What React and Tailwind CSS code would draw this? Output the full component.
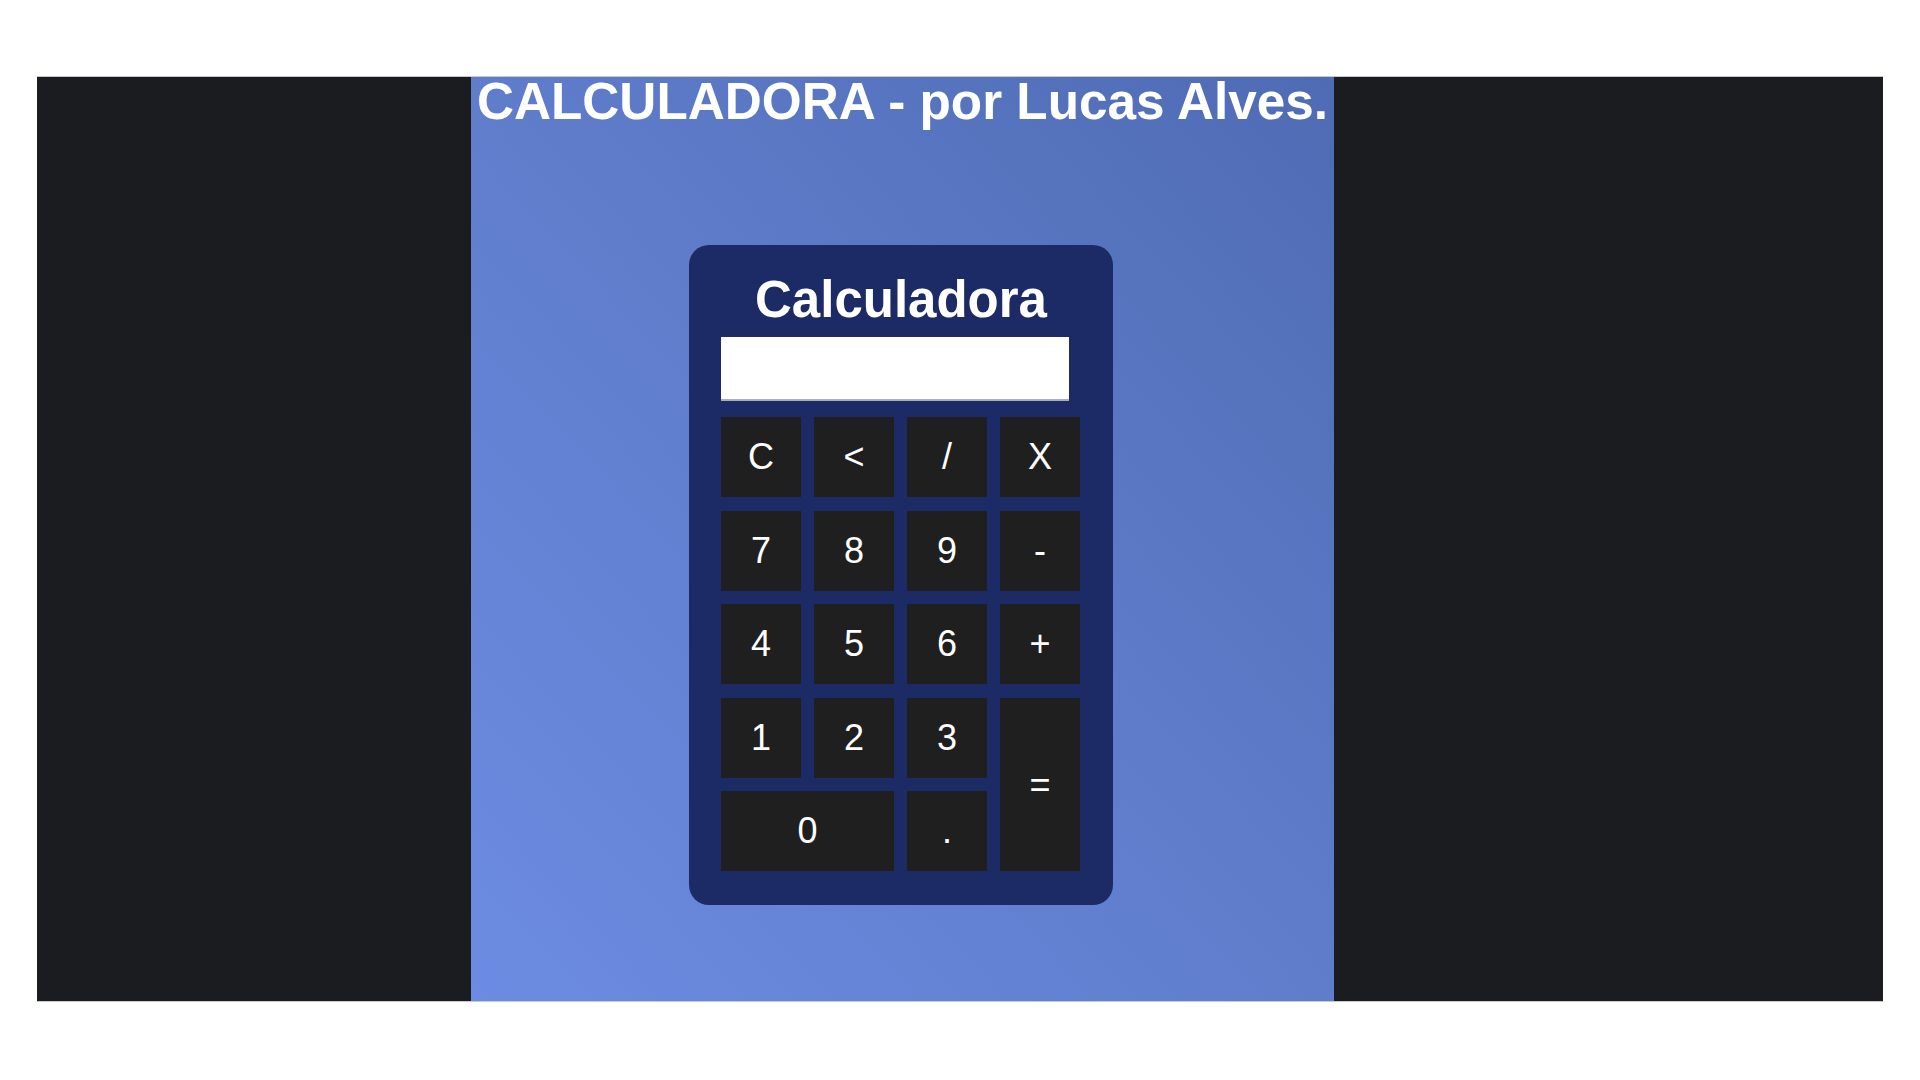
export default function App() {
  const keys = [
    { label: 'C' },
    { label: '<' },
    { label: '/' },
    { label: 'X' },
    { label: '7' },
    { label: '8' },
    { label: '9' },
    { label: '-' },
    { label: '4' },
    { label: '5' },
    { label: '6' },
    { label: '+' },
    { label: '1' },
    { label: '2' },
    { label: '3' },
    { label: '=', cls: 'row-span-2' },
    { label: '0', cls: 'col-span-2' },
    { label: '.' },
  ];

  return (
    <div className="min-h-screen bg-white pt-[76px] pl-[37px] font-['Liberation_Sans',Arial,sans-serif]">
      <div className="w-[1846px] h-[926px] bg-[#1b1c20] flex border-y border-[#c8c8cc]">
        <div className="ml-[434px] w-[863px] h-full flex flex-col bg-gradient-to-tr from-[#6c8ce3] via-[#5f7dcb] to-[#4f6bb4]">
          <h1 className="text-[51.3px] leading-none font-bold text-white text-center -mt-px">
            CALCULADORA - por Lucas Alves.
          </h1>

          <div className="mt-[118px] ml-[218px] w-[424px] bg-[#1c2b65] rounded-[20px] px-[32px] pt-[29px] pb-[34px] flex flex-col">
            <h2 className="text-[51px] leading-none font-bold text-white text-center">Calculadora</h2>
            <div className="mt-[12px] w-[348px] h-[64px] bg-white border-b-2 border-[#a9adc0]"></div>

            <div className="mt-[16px] grid grid-cols-[repeat(4,80px)] auto-rows-[80px] gap-x-[13px] gap-y-[13.5px]">
              {keys.map((k) => (
                <button
                  key={k.label}
                  className={`bg-[#1f1f1f] text-white text-[36px] leading-none flex items-center justify-center ${k.cls || ''}`}
                >
                  {k.label}
                </button>
              ))}
            </div>
          </div>
        </div>
      </div>
    </div>
  );
}
